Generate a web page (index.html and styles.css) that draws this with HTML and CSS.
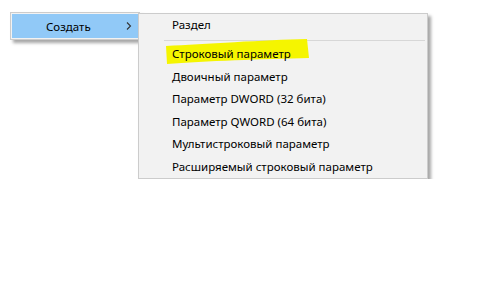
FILE: index.html
```html
<!DOCTYPE html>
<html lang="ru">
<head>
    <meta charset="UTF-8">
    <title>Создать</title>
    <link rel="stylesheet" href="styles.css">
</head>
<body>
    <div class="desk">
        <div class="menu parent">
            <div class="item active">
                <span class="label">Создать</span>
                <svg class="chevron" width="6" height="8" viewBox="0 0 6 8"><path d="M1 0.5 L4.5 4 L1 7.5" fill="none" stroke="#333" stroke-width="1.1"/></svg>
            </div>
        </div>
        <div class="menu sub">
            <div class="item first">Раздел</div>
            <div class="sep"></div>
            <div class="item marked">
                <svg class="marker" width="146" height="26" viewBox="0 0 146 26"><path d="M2 8 C40 6 100 2 143 1 L145 20 C100 21 40 23 3 26 Z" fill="#f5f500"/></svg>
                <span class="text">Строковый параметр</span>
            </div>
            <div class="item">Двоичный параметр</div>
            <div class="item">Параметр DWORD (32 бита)</div>
            <div class="item">Параметр QWORD (64 бита)</div>
            <div class="item">Мультистроковый параметр</div>
            <div class="item">Расширяемый строковый параметр</div>
        </div>
    </div>
</body>
</html>
```

FILE: styles.css
```css
body {
    margin: 0;
    background: #ffffff;
    font-family: "Noto Sans", "Open Sans", sans-serif;
    font-size: 11.5px;
    color: #000;
}
.desk {
    display: flex;
    align-items: flex-start;
    padding: 12px 0 0 10px;
}
.menu {
    background: #f2f2f2;
    border: 1px solid #cccccc;
    box-shadow: 3px 3px 3px rgba(0, 0, 0, 0.35);
}
.parent {
    width: 126px;
    padding: 1px;
}
.parent .item {
    height: 24px;
    display: flex;
    align-items: center;
    background: #91c9f7;
}
.parent .label {
    margin-left: 34px;
    flex: 1;
}
.chevron {
    margin-right: 6px;
}
.sub {
    position: relative;
    margin-top: 1px;
    margin-left: -2px;
    width: 288px;
}
.sub .item {
    height: 22.5px;
    line-height: 22.5px;
    padding-left: 33px;
    white-space: nowrap;
}
.sub .first {
    height: 22px;
    line-height: 22px;
}
.sep {
    height: 1px;
    background: #d7d7d7;
    margin: 4px 2px 2px 25px;
}
.marked {
    position: relative;
}
.marker {
    position: absolute;
    left: 25px;
    top: -5px;
}
.marked .text {
    position: relative;
}
```
